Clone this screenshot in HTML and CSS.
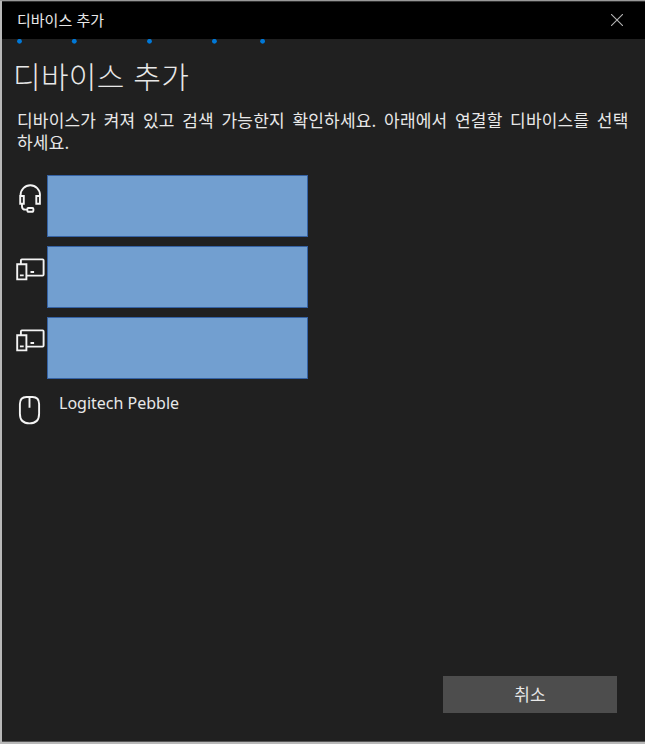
FILE: index.html
```html
<!DOCTYPE html>
<html lang="ko">
<head>
  <meta charset="UTF-8" />
  <title>디바이스 추가</title>
  <link rel="stylesheet" href="styles.css">
</head>
<body>
  <div class="window">
    <header class="title-bar">
      <span class="window-title">디바이스 추가</span>
      <button class="close-button" aria-label="닫기">
        <svg viewBox="0 0 12 12" width="12" height="12">
          <path d="M0 0L12 12M12 0L0 12" fill="none" stroke="#b4b4b4" stroke-width="1.1"/>
        </svg>
      </button>
    </header>

    <!-- Searching indicator -->
    <svg class="progress" viewBox="0 0 643 5" width="643" height="5">
      <circle cx="17.5" cy="2.3" r="2.4"/>
      <circle cx="72.3" cy="2.3" r="2.4"/>
      <circle cx="147.5" cy="2.3" r="2.4"/>
      <circle cx="212.4" cy="2.3" r="2.4"/>
      <circle cx="260.6" cy="2.3" r="2.4"/>
    </svg>

    <main class="content">
      <h1>디바이스 추가</h1>
      <p class="description">디바이스가 켜져 있고 검색 가능한지 확인하세요. 아래에서 연결할 디바이스를 선택<br>하세요.</p>

      <ul class="device-list">
        <li class="device">
          <svg class="device-icon" viewBox="0 0 30 30" width="30" height="30">
            <path d="M5.6 12.5V12a9.7 9.7 0 0 1 19.4 0v.5M5.2 13h3.6v7.7H5.2zM21.3 13h3.6v7.7h-3.6zM7 21v2.4q0 3.2 3.5 3.2h1.5M13.2 25h4.2q1 0 1 1v1.2q0 1.6-1.5 1.6h-3q-1.6 0-1.6-1.6v-1.2q0-1 .9-1z"/>
          </svg>
          <div class="redacted"></div>
        </li>
        <li class="device">
          <svg class="device-icon" viewBox="0 0 30 30" width="30" height="30">
            <path d="M5.9 9.5V6.4q0-1 1-1h20.7q1 0 1 1v14.2q0 1-1 1H12M2.2 10.3h9.2v15.1H2.2zM4.9 21.4h3.8M15.5 18h3.6"/>
          </svg>
          <div class="redacted"></div>
        </li>
        <li class="device">
          <svg class="device-icon" viewBox="0 0 30 30" width="30" height="30">
            <path d="M5.9 9.5V6.4q0-1 1-1h20.7q1 0 1 1v14.2q0 1-1 1H12M2.2 10.3h9.2v15.1H2.2zM4.9 21.4h3.8M15.5 18h3.6"/>
          </svg>
          <div class="redacted"></div>
        </li>
        <li class="device">
          <svg class="device-icon" viewBox="0 0 30 30" width="30" height="30">
            <path d="M11.5 1h6q6.6 0 6.6 7v9.8q0 9.6-9.6 9.6T4.9 17.8V8q0-7 6.6-7zM14.5 1v10.7"/>
          </svg>
          <span class="device-name">Logitech Pebble</span>
        </li>
      </ul>

      <footer class="actions">
        <button class="cancel-button">취소</button>
      </footer>
    </main>
  </div>
</body>
</html>
```

FILE: styles.css
```css
* { box-sizing: border-box; }
body {
  margin: 0;
  height: 744px;
  padding: 1px 0 2px 2px;
  overflow: hidden;
  font-family: "Noto Sans CJK KR", sans-serif;
  color: #e8e8e8;
  background: linear-gradient(#999 1px, #b8b8b8 1px);
}
.window {
  height: 741px;
  display: flex;
  flex-direction: column;
  background-color: #202020;
  border-bottom: 1px solid #555;
}
.title-bar {
  height: 38px;
  flex-shrink: 0;
  display: flex;
  align-items: center;
  justify-content: space-between;
  padding: 0 22px 1px 15px;
  background-color: #000;
  border-top: 1px solid #333;
}
.window-title {
  font-size: 15px;
  line-height: 20px;
}
.close-button {
  display: flex;
  padding: 0;
  border: none;
  background: none;
}
.progress {
  display: block;
  flex-shrink: 0;
  fill: #0078d7;
}
.content {
  flex-grow: 1;
  display: flex;
  flex-direction: column;
  padding: 11px 28px 28px 12px;
}
h1 {
  margin: 0 0 0 -1px;
  font-size: 30px;
  font-weight: 300;
  line-height: 40px;
  letter-spacing: 0.3px;
}
.description {
  margin: 14px 0 0 3px;
  font-size: 17px;
  line-height: 22px;
  letter-spacing: 0.2px;
  word-spacing: 2.6px;
  white-space: nowrap;
}
.device-list {
  margin: 22px 0 0;
  padding: 0;
  list-style: none;
  display: flex;
  flex-direction: column;
  gap: 9px;
}
.device {
  height: 62px;
  display: flex;
  align-items: flex-start;
}
.device-icon {
  margin: 8px 3px 0 1px;
  fill: none;
  stroke: #f4f4f4;
  stroke-width: 1.9;
}
.redacted {
  width: 261px;
  height: 62px;
  margin-left: -1px;
  background-color: #729fd0;
  border: 1px solid #3562a4;
}
.device-name {
  margin: 4px 0 0 11px;
  font-family: "Noto Sans", sans-serif;
  font-size: 16px;
  line-height: 22px;
}
.actions {
  display: flex;
  justify-content: flex-end;
  margin-top: auto;
}
.cancel-button {
  width: 174px;
  height: 37px;
  padding: 0 0 2px;
  font-family: inherit;
  font-size: 17px;
  color: #e8e8e8;
  background-color: #4d4d4d;
  border: none;
}
```
